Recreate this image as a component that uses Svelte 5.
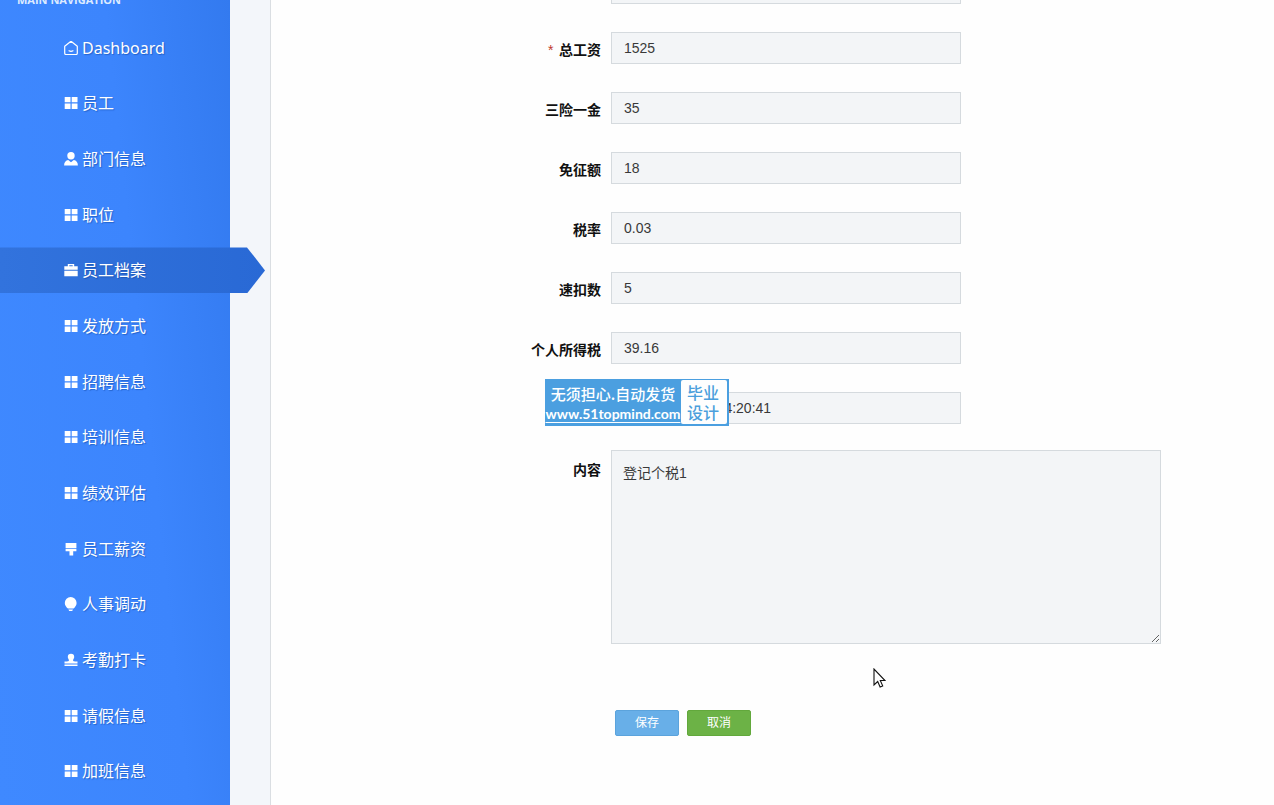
<script>
  const nav = [
    { label: 'Dashboard', icon: 'home' },
    { label: '员工', icon: 'grid' },
    { label: '部门信息', icon: 'user' },
    { label: '职位', icon: 'grid' },
    { label: '员工档案', icon: 'case', active: true },
    { label: '发放方式', icon: 'grid' },
    { label: '招聘信息', icon: 'grid' },
    { label: '培训信息', icon: 'grid' },
    { label: '绩效评估', icon: 'grid' },
    { label: '员工薪资', icon: 'brush' },
    { label: '人事调动', icon: 'bulb' },
    { label: '考勤打卡', icon: 'stamp' },
    { label: '请假信息', icon: 'grid' },
    { label: '加班信息', icon: 'grid' }
  ];

  let fields = $state([
    { id: 'base', label: '', value: '' },
    { id: 'total', label: '总工资', value: '1525', required: true },
    { id: 'insurance', label: '三险一金', value: '35' },
    { id: 'exempt', label: '免征额', value: '18' },
    { id: 'rate', label: '税率', value: '0.03' },
    { id: 'deduct', label: '速扣数', value: '5' },
    { id: 'tax', label: '个人所得税', value: '39.16' },
    { id: 'time', label: '登记时间', value: '2023-05-12 PM 4:20:41', banner: true }
  ]);
  let content = $state('登记个税1');
</script>

<div class="page">
  <aside>
    <h2>MAIN NAVIGATION</h2>
    <nav>
      {#each nav as item}
        <div class="item">
          <a href="#top" class:active={item.active}>
            <svg viewBox="0 0 14 14" width="14" height="14" aria-hidden="true">
              {#if item.icon === 'home'}
                <path d="M.7 5.200 7 .2l6.300 5v7a1.300 1.300 0 0 1-1.300 1.300H2A1.300 1.300 0 0 1 .7 12.200z" fill="none" stroke="currentColor" stroke-width="1.200" stroke-linejoin="round" />
                <path d="M5 9.800q2 1.100 4 0" fill="none" stroke="currentColor" stroke-width="1.200" stroke-linecap="round" />
              {:else if item.icon === 'grid'}
                <path d="M.700 1h5.800v5.200H.700zM7.700 1h5.800v5.200H7.700zM.700 7.600h5.800V13H.700zM7.700 7.600h5.800V13H7.700z" fill="currentColor" />
              {:else if item.icon === 'user'}
                <circle cx="7" cy="3.700" r="3.700" fill="currentColor" />
                <path d="M4.200 7.900 7 10.200l2.800-2.300c2.400.5 4.100 2.300 4.100 5.500H.1c0-3.200 1.700-5 4.100-5.500z" fill="currentColor" />
              {:else if item.icon === 'case'}
                <path d="M3.800 3.200V.900h6.400v2.300h3.500v3.500H.300V3.200zm1.500 0h3.400V2.200H5.300zM.300 7.700h13.400V13.200H.300z" fill="currentColor" />
              {:else if item.icon === 'brush'}
                <path d="M1.600 1h10.800v5.300H1.600zM1.600 7h10.800v2.200H9.200v4.200H5.500V9.200H1.600z" fill="currentColor" />
              {:else if item.icon === 'bulb'}
                <path d="M6.700 0a5.900 5.900 0 0 1 5.900 5.900c0 2.500-1.500 3.900-3 5.700H3.900C2.300 9.800.800 8.400.800 5.900A5.900 5.900 0 0 1 6.700 0zM4.400 12.400H9L8.200 14h-3z" fill="currentColor" />
              {:else}
                <path d="M7 .800a3.200 3.200 0 0 1 3.200 3.200c0 1.500-1.100 2-1.100 3.500 0 .6.800.8 4.400 1.100v2H.5v-2c3.600-.3 4.400-.5 4.400-1.100C4.900 6 3.800 5.500 3.800 4A3.200 3.200 0 0 1 7 .800zM.500 11.600h13v1.500H.500z" fill="currentColor" />
              {/if}
            </svg>
            <span>{item.label}</span>
          </a>
        </div>
      {/each}
    </nav>
  </aside>

  <main>
    <form onsubmit={(e) => e.preventDefault()}>
      {#each fields as field}
        <div class="row">
          <label for={field.id}>
            {#if field.required}<span class="star">*</span>{/if}
            {field.label}
          </label>
          <input id={field.id} type="text" bind:value={field.value} />
          {#if field.banner}
            <div class="banner">
              <div class="ad">
                <span class="slogan">无须担心.自动发货</span>
                <span class="site">www.51topmind.com</span>
              </div>
              <div class="badge">毕业<br />设计</div>
            </div>
          {/if}
        </div>
      {/each}
      <div class="row top">
        <label for="content">内容</label>
        <textarea id="content" bind:value={content}></textarea>
      </div>
      <div class="row">
        <div class="actions">
          <button type="submit" class="save">保存</button>
          <button type="button" class="cancel">取消</button>
        </div>
      </div>
    </form>
  </main>

  <svg class="pointer" viewBox="0 0 13 20" width="13" height="20" aria-hidden="true">
    <path d="M1 1v16l3.700-3.500 2.400 5.500 2.600-1.100L7.300 12.500H12z" fill="#fff" stroke="#111" stroke-width="1.100" />
  </svg>
</div>

<style>
  :global(body) {
    margin: 0;
    background: #fefefe;
  }
  .page {
    position: relative;
    display: flex;
    height: 100vh;
    overflow: hidden;
    font-family: 'Noto Sans', 'Noto Sans CJK SC', sans-serif;
  }
  aside {
    position: relative;
    z-index: 1;
    display: flex;
    flex-direction: column;
    flex: none;
    width: 230px;
    color: #fff;
    background: linear-gradient(84deg, #3f89ff 0%, #3c85fd 60%, #337aef 100%);
  }
  h2 {
    margin: -8px 0 0;
    padding: 0 17px 12px;
    font: 700 11px/16px 'Open Sans', sans-serif;
    color: #dceaff;
  }
  nav {
    display: flex;
    flex: 1;
    flex-direction: column;
    padding-bottom: 6px;
  }
  .item {
    display: flex;
    flex: 1;
    align-items: center;
  }
  a {
    display: flex;
    flex: none;
    align-items: center;
    gap: 4px;
    box-sizing: border-box;
    width: 100%;
    height: 46px;
    padding-left: 64px;
    font-size: 16px;
    line-height: 24px;
    color: #fff;
    text-decoration: none;
    text-shadow: 1px 1px 1px rgba(0, 50, 130, 0.4);
  }
  a.active {
    width: 265px;
    background: linear-gradient(90deg, #3273dd, #2969d5);
    clip-path: polygon(0 0, 247px 0, 100% 50%, 247px 100%, 0 100%);
  }
  main {
    flex: 1;
    min-width: 0;
    margin-left: 40px;
    border-left: 1px solid #dadee2;
    background: #fefefe;
    box-shadow: -40px 0 0 #f3f6fa;
  }
  form {
    display: flex;
    flex-direction: column;
    gap: 28px;
    margin-top: -28px;
  }
  .row {
    position: relative;
    display: grid;
    grid-template-columns: 33% minmax(0, 1fr);
    column-gap: 9px;
    align-items: center;
  }
  .row.top {
    align-items: start;
    margin-top: -2px;
  }
  label {
    padding: 4px 1px 0 0;
    font-size: 14px;
    font-weight: 700;
    line-height: 20px;
    color: #111;
    text-align: right;
  }
  .top label {
    padding-top: 10px;
  }
  .star {
    font-family: 'Liberation Sans', sans-serif;
    margin-right: 2px;
    font-weight: 400;
    color: #c0392b;
  }
  input,
  textarea {
    box-sizing: border-box;
    width: 350px;
    max-width: 100%;
    height: 32px;
    margin: 0;
    padding: 0 12px;
    border: 1px solid #d5dade;
    border-radius: 0;
    outline: none;
    background: #f3f5f7;
    font: 14px/20px 'Liberation Sans', 'Noto Sans CJK SC', sans-serif;
    color: #393939;
  }
  textarea {
    width: 550px;
    height: 194px;
    padding: 12px 11px;
    resize: both;
  }
  .actions {
    display: flex;
    grid-column: 2;
    gap: 8px;
    padding: 38px 4px 0;
  }
  button {
    width: 64px;
    height: 26px;
    padding: 0 0 2px;
    border: 1px solid #5ba3dc;
    border-radius: 2px;
    background: #68afe8;
    font: 12px/18px 'Noto Sans CJK SC', sans-serif;
    color: #fff;
  }
  .cancel {
    border-color: #62a83c;
    background: #6cb246;
  }
  .banner {
    position: absolute;
    top: -13px;
    left: calc(33% - 57px);
    display: flex;
    box-sizing: border-box;
    width: 184px;
    height: 47px;
    padding: 1px 2px 2px 0;
    background: #4b9fe0;
    color: #fff;
  }
  .ad {
    display: flex;
    flex: 1;
    flex-direction: column;
    align-items: center;
    padding-top: 4px;
    white-space: nowrap;
  }
  .slogan {
    font: 500 15px/20px 'Noto Sans CJK SC', sans-serif;
  }
  .site {
    font: 700 14px/20px Lato, sans-serif;
    text-decoration: underline;
    text-decoration-thickness: 1px;
    text-underline-offset: 3px;
  }
  .badge {
    box-sizing: border-box;
    flex: none;
    width: 46px;
    padding: 2px 2px 0 0;
    border-radius: 2px;
    background: #fefefe;
    font: 500 16px/20px 'Noto Sans CJK SC', sans-serif;
    color: #4b9fdc;
    text-align: center;
  }
  .pointer {
    position: absolute;
    top: 668px;
    left: 873px;
  }
</style>
